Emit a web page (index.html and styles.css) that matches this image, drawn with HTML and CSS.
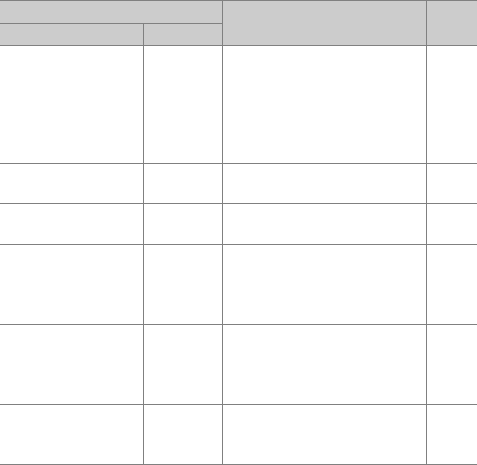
FILE: index.html
```html
<!DOCTYPE html>
<html>
<head>
<meta charset="utf-8">
<link rel="stylesheet" href="styles.css">
</head>
<body>
<div class="table">
  <div class="th span-cols"></div>
  <div class="th span-rows"></div>
  <div class="th span-rows"></div>
  <div class="th"></div>
  <div class="th"></div>

  <div class="td"></div><div class="td"></div><div class="td"></div><div class="td"></div>
  <div class="td"></div><div class="td"></div><div class="td"></div><div class="td"></div>
  <div class="td"></div><div class="td"></div><div class="td"></div><div class="td"></div>
  <div class="td"></div><div class="td"></div><div class="td"></div><div class="td"></div>
  <div class="td"></div><div class="td"></div><div class="td"></div><div class="td"></div>
  <div class="td"></div><div class="td"></div><div class="td"></div><div class="td"></div>
</div>
</body>
</html>
```
FILE: styles.css
```css
html, body {
  margin: 0;
  padding: 0;
  background: #ffffff;
  font-family: "Liberation Sans", Arial, sans-serif;
}

.table {
  display: grid;
  grid-template-columns: 143px 78px 203px 1fr;
  grid-template-rows: 22px 21px 117px 39px 40px 79px 79px 59px;
  gap: 1px;
  padding: 1px 0;
  background: #808080;
  width: 477px;
  height: 465px;
  box-sizing: border-box;
}

.th {
  background: #cccccc;
}

.td {
  background: #ffffff;
}

.span-cols {
  grid-column: span 2;
}

.span-rows {
  grid-row: span 2;
}
```
